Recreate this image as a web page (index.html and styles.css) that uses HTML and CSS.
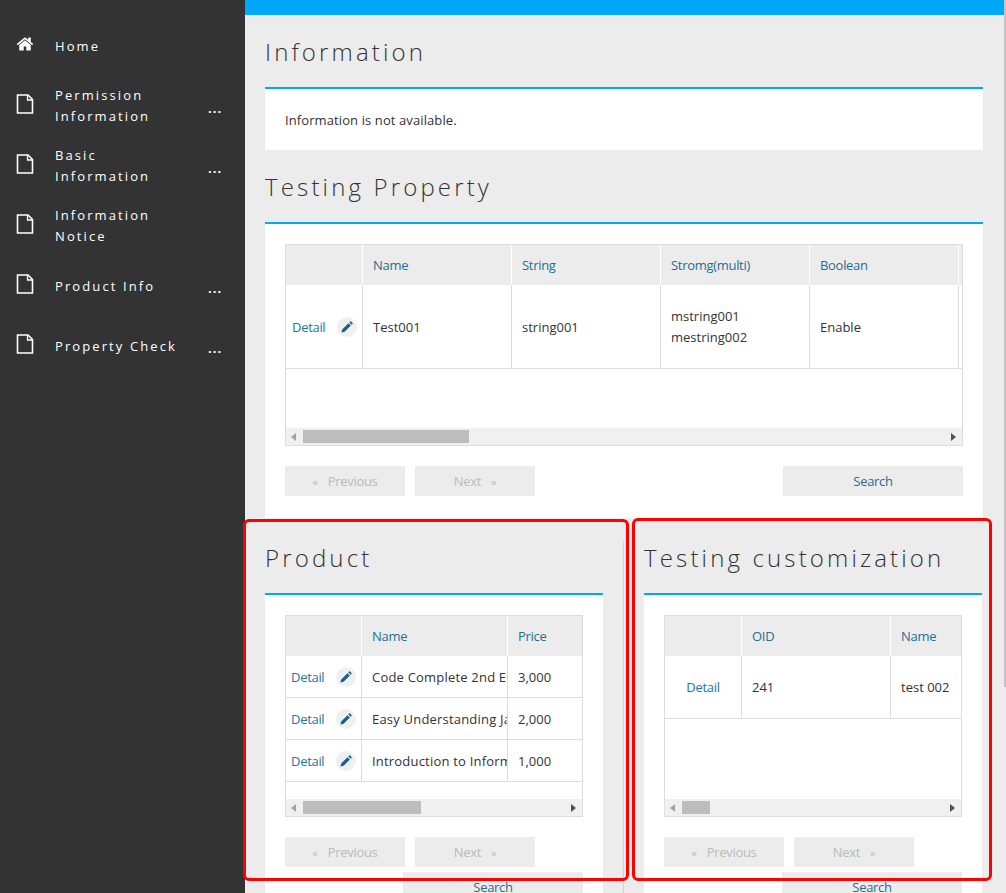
FILE: index.html
```html
<!DOCTYPE html>
<html lang="en">
<head>
    <meta charset="UTF-8">
    <meta name="viewport" content="width=device-width, initial-scale=1.0">
    <title>Information</title>
    <link rel="stylesheet" href="styles.css">
</head>
<body>
    <svg class="icon-defs" width="0" height="0">
        <symbol id="icon-file" viewBox="0 0 18 20"><path d="M1.5 1h10.5l4.5 4.5v13.500h-15z" fill="none" stroke="#fff" stroke-width="1.600"/><path d="M11.500 1v5h5" fill="none" stroke="#fff" stroke-width="1.300"/></symbol>
        <symbol id="icon-pencil" viewBox="0 0 14 14"><path d="M.5 13.500l.9-3.700 7.300-7.300 2.800 2.800-7.300 7.300zM9.600 1.600l1-1q.6-.5 1.200 0l1.600 1.600q.5.6 0 1.200l-1 1z" fill="#1d5f86"/></symbol>
    </svg>

    <nav class="sidebar">
        <a class="nav-item">
            <svg class="nav-icon" viewBox="0 0 1792 1792"><path fill="#fff" d="M1472 992v480q0 26-19 45t-45 19h-384v-384h-256v384h-384q-26 0-45-19t-19-45v-480q0-1 .5-3t.5-3l575-474 575 474q1 2 1 6zm223-69l-62 74q-8 9-21 11h-3q-13 0-21-7l-692-577-692 577q-12 8-24 7-13-2-21-11l-62-74q-8-10-7-23.5t11-21.5l719-599q32-26 76-26t76 26l244 204v-195q0-14 9-23t23-9h192q14 0 23 9t9 23v408l219 182q10 8 11 21.5t-7 23.5z"/></svg>
            <span class="nav-label">Home</span>
        </a>
        <a class="nav-item">
            <svg class="nav-icon"><use href="#icon-file"/></svg>
            <span class="nav-label">Permission Information</span>
            <span class="nav-more">...</span>
        </a>
        <a class="nav-item">
            <svg class="nav-icon"><use href="#icon-file"/></svg>
            <span class="nav-label">Basic<br>Information</span>
            <span class="nav-more">...</span>
        </a>
        <a class="nav-item">
            <svg class="nav-icon"><use href="#icon-file"/></svg>
            <span class="nav-label">Information Notice</span>
        </a>
        <a class="nav-item">
            <svg class="nav-icon"><use href="#icon-file"/></svg>
            <span class="nav-label">Product Info</span>
            <span class="nav-more">...</span>
        </a>
        <a class="nav-item">
            <svg class="nav-icon"><use href="#icon-file"/></svg>
            <span class="nav-label">Property Check</span>
            <span class="nav-more">...</span>
        </a>
    </nav>

    <main class="content">
        <div class="top-bar"></div>
        <div class="page-scroll"></div>

        <section class="block">
            <h2 class="block-title">Information</h2>
            <div class="panel panel-note">Information is not available.</div>
        </section>

        <section class="block">
            <h2 class="block-title">Testing Property</h2>
            <div class="panel panel-property">
                <div class="grid-box">
                    <div class="grid-view">
                        <table class="grid grid-property">
                            <colgroup><col class="col-act"><col class="col-std"><col class="col-std"><col class="col-std"><col class="col-std"><col class="col-std"></colgroup>
                            <thead>
                                <tr><th></th><th>Name</th><th>String</th><th>Stromg(multi)</th><th>Boolean</th><th></th></tr>
                            </thead>
                            <tbody>
                                <tr class="row-tall">
                                    <td class="cell-detail"><span class="detail-wrap"><a class="detail-link">Detail</a><span class="edit-btn"><svg><use href="#icon-pencil"/></svg></span></span></td>
                                    <td>Test001</td>
                                    <td>string001</td>
                                    <td class="cell-multi">mstring001<br>mestring002</td>
                                    <td>Enable</td>
                                    <td></td>
                                </tr>
                            </tbody>
                        </table>
                    </div>
                    <div class="hscroll"><span class="arrow-left"></span><span class="thumb thumb-property"></span><span class="arrow-right"></span></div>
                </div>
                <div class="pager">
                    <div class="pager-nav">
                        <button class="btn btn-off"><span class="btn-mark">«</span>Previous</button>
                        <button class="btn btn-off">Next<span class="btn-mark btn-mark-after">»</span></button>
                    </div>
                    <button class="btn btn-search">Search</button>
                </div>
            </div>
        </section>

        <div class="split">
            <section class="split-left">
                <h2 class="block-title block-title-split">Product</h2>
                <div class="panel panel-fill">
                    <div class="grid-box">
                        <div class="grid-view">
                            <table class="grid grid-product">
                                <colgroup><col class="col-act-sm"><col class="col-name-sm"><col class="col-std"></colgroup>
                                <thead>
                                    <tr><th></th><th>Name</th><th>Price</th></tr>
                                </thead>
                                <tbody>
                                    <tr class="row-short">
                                        <td class="cell-detail"><span class="detail-wrap"><a class="detail-link">Detail</a><span class="edit-btn"><svg><use href="#icon-pencil"/></svg></span></span></td>
                                        <td class="cell-title">Code Complete 2nd Edition</td>
                                        <td>3,000</td>
                                    </tr>
                                    <tr class="row-short">
                                        <td class="cell-detail"><span class="detail-wrap"><a class="detail-link">Detail</a><span class="edit-btn"><svg><use href="#icon-pencil"/></svg></span></span></td>
                                        <td class="cell-title">Easy Understanding Java</td>
                                        <td>2,000</td>
                                    </tr>
                                    <tr class="row-short">
                                        <td class="cell-detail"><span class="detail-wrap"><a class="detail-link">Detail</a><span class="edit-btn"><svg><use href="#icon-pencil"/></svg></span></span></td>
                                        <td class="cell-title">Introduction to Information</td>
                                        <td>1,000</td>
                                    </tr>
                                </tbody>
                            </table>
                        </div>
                        <div class="hscroll"><span class="arrow-left"></span><span class="thumb thumb-product"></span><span class="arrow-right"></span></div>
                    </div>
                    <div class="pager">
                        <div class="pager-nav">
                            <button class="btn btn-off"><span class="btn-mark">«</span>Previous</button>
                            <button class="btn btn-off">Next<span class="btn-mark btn-mark-after">»</span></button>
                        </div>
                        <button class="btn btn-search">Search</button>
                    </div>
                </div>
            </section>

            <section class="split-right">
                <h2 class="block-title block-title-right">Testing customization</h2>
                <div class="panel panel-fill">
                    <div class="grid-box">
                        <div class="grid-view">
                            <table class="grid grid-custom">
                                <colgroup><col class="col-act"><col class="col-std"><col class="col-std"></colgroup>
                                <thead>
                                    <tr><th></th><th>OID</th><th>Name</th></tr>
                                </thead>
                                <tbody>
                                    <tr class="row-mid">
                                        <td class="cell-center"><a class="detail-link">Detail</a></td>
                                        <td>241</td>
                                        <td>test 002</td>
                                    </tr>
                                </tbody>
                            </table>
                        </div>
                        <div class="hscroll"><span class="arrow-left"></span><span class="thumb thumb-custom"></span><span class="arrow-right"></span></div>
                    </div>
                    <div class="pager">
                        <div class="pager-nav">
                            <button class="btn btn-off"><span class="btn-mark">«</span>Previous</button>
                            <button class="btn btn-off">Next<span class="btn-mark btn-mark-after">»</span></button>
                        </div>
                        <button class="btn btn-search">Search</button>
                    </div>
                </div>
            </section>
        </div>

        <div class="callout callout-left"></div>
        <div class="callout callout-right"></div>
    </main>
</body>
</html>
```

FILE: styles.css
```css
html, body {
    margin: 0;
    height: 100%;
    overflow: hidden;
}
body {
    display: flex;
    font-family: "Open Sans", "Noto Sans", sans-serif;
    font-size: 13px;
    color: #333;
    background: #ececec;
}
.icon-defs {
    position: absolute;
}

/* sidebar */
.sidebar {
    width: 245px;
    height: 893px;
    padding-top: 16px;
    box-sizing: border-box;
    flex: none;
    background: #333;
    color: #fff;
}
.nav-item {
    display: flex;
    align-items: center;
    height: 60px;
    padding-left: 16px;
}
.nav-icon {
    width: 18px;
    height: 20px;
    margin-right: 21px;
    margin-top: -5px;
    flex: none;
}
.nav-label {
    width: 150px;
    font-size: 13px;
    line-height: 21px;
    letter-spacing: 2.1px;
}
.nav-more {
    font-size: 13px;
    font-weight: 700;
    letter-spacing: 1px;
    line-height: 13px;
    margin-left: 3px;
    margin-top: 4px;
}

/* main column */
.content {
    flex: 1;
    height: 893px;
    position: relative;
    min-width: 0;
}
.top-bar {
    height: 15px;
    background: #00a8f7;
}
.page-scroll {
    position: absolute;
    top: 0;
    right: 0;
    width: 2px;
    height: 687px;
    background: #c4c4c4;
}
.block {
    margin: 0 23px 0 20px;
}
.block-title {
    height: 72px;
    margin: 0;
    font-size: 24px;
    font-weight: 300;
    line-height: 74px;
    letter-spacing: 3.15px;
    color: #333;
    border-bottom: 2px solid #00a8f7;
}
.block-title-split {
    height: 75px;
    line-height: 80px;
}
.block-title-right {
    height: 52px;
    line-height: 34px;
}
.panel {
    padding: 20px;
    background: #fff;
}
.panel-note {
    height: 61px;
    box-sizing: border-box;
    padding-top: 21px;
    line-height: 21px;
    letter-spacing: .1px;
}
.panel-property {
    padding-bottom: 22px;
}
.panel-fill {
    height: 298px;
    box-sizing: border-box;
}

/* the two columns under the property block, cut off by the window */
.split {
    display: flex;
    height: 375px;
    margin-left: 20px;
    overflow: hidden;
}
.split-left {
    width: 338px;
    margin-right: 20px;
    flex: none;
}
.split-right {
    width: 338px;
    margin-top: 23px;
    padding-left: 20px;
    border-left: 1px solid #d2d2d2;
    flex: none;
}

/* grids */
.grid-box {
    height: 202px;
    box-sizing: border-box;
    display: flex;
    flex-direction: column;
    border: 1px solid #ddd;
}
.grid-view {
    flex: 1;
    overflow: hidden;
}
.grid {
    table-layout: fixed;
    border-collapse: separate;
    border-spacing: 0;
}
.grid-property {
    width: 822px;
}
.grid-product {
    width: 371px;
}
.grid-custom {
    width: 375px;
}
.col-act {
    width: 77px;
}
.col-act-sm {
    width: 76px;
}
.col-name-sm {
    width: 146px;
}
.col-std {
    width: 149px;
}
.grid th {
    height: 40px;
    padding: 0 0 0 10px;
    box-sizing: border-box;
    font-weight: 400;
    letter-spacing: -.3px;
    text-align: left;
    color: #1e6f92;
    background: #ececec;
    border-right: 1px solid #fff;
}
.grid td {
    padding: 1px 0 0 10px;
    box-sizing: border-box;
    line-height: 21px;
    white-space: nowrap;
    overflow: hidden;
    border-right: 1px solid #ddd;
    border-bottom: 1px solid #ddd;
}
.row-tall td {
    height: 84px;
}
.row-mid td {
    height: 63px;
}
.row-short td {
    height: 42px;
}
.grid td.cell-multi {
    padding-top: 0;
}
.grid td.cell-title {
    letter-spacing: .2px;
}
.grid td.cell-detail {
    padding: 1px 0 0 6px;
}
.grid-product td.cell-detail {
    padding-left: 5px;
}
.grid td.cell-center {
    padding: 1px 0 0;
    text-align: center;
}
.detail-wrap {
    display: flex;
    align-items: center;
}
.detail-link {
    color: #1877a0;
    letter-spacing: -.3px;
}
.edit-btn {
    display: flex;
    align-items: center;
    justify-content: center;
    width: 20px;
    height: 20px;
    margin-left: 12px;
    border-radius: 50%;
    background: #eef0f1;
}
.edit-btn svg {
    width: 12px;
    height: 12px;
}

/* fake horizontal scrollbar */
.hscroll {
    display: flex;
    align-items: center;
    height: 17px;
    flex: none;
    background: #f0f0f0;
}
.arrow-left {
    width: 0;
    height: 0;
    margin-left: 5px;
    margin-right: 7px;
    border-style: solid;
    border-width: 4px 5px 4px 0;
    border-color: transparent #a3a3a3 transparent transparent;
}
.arrow-right {
    width: 0;
    height: 0;
    margin-left: auto;
    margin-right: 6px;
    border-style: solid;
    border-width: 4px 0 4px 5px;
    border-color: transparent transparent transparent #505050;
}
.thumb {
    height: 13px;
    background: #bdbdbd;
}
.thumb-property {
    width: 166px;
}
.thumb-product {
    width: 118px;
}
.thumb-custom {
    width: 28px;
}

/* pager */
.pager {
    display: flex;
    flex-wrap: wrap;
    justify-content: space-between;
    row-gap: 5px;
    margin-top: 20px;
}
.pager-nav {
    display: flex;
    gap: 10px;
}
.btn {
    width: 120px;
    height: 30px;
    padding: 0;
    border: 0;
    font: inherit;
    letter-spacing: -.3px;
    background: #ececec;
}
.btn-off {
    color: #bbb;
}
.btn-mark {
    margin-right: 10px;
    font-size: 11px;
}
.btn-mark-after {
    margin-right: 0;
    margin-left: 10px;
}
.btn-search {
    width: 180px;
    margin-left: auto;
    color: #2b6c8e;
}

/* red annotation boxes drawn over the page */
.callout {
    position: absolute;
    box-sizing: border-box;
    border: 3px solid #f00;
    border-radius: 6px;
    pointer-events: none;
}
.callout-left {
    left: -2px;
    top: 519px;
    width: 386px;
    height: 362px;
}
.callout-right {
    left: 387px;
    top: 518px;
    width: 360px;
    height: 363px;
}
```
